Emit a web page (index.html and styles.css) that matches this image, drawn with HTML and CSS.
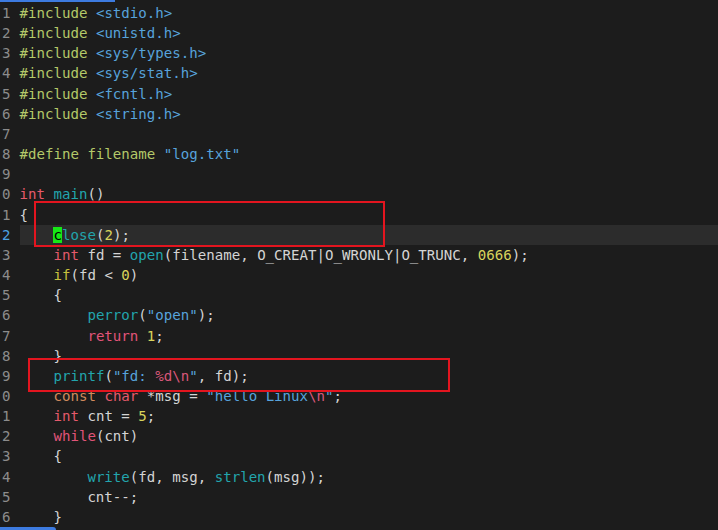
FILE: index.html
```html
<!DOCTYPE html>
<html lang="en">
<head>
    <meta charset="UTF-8">
    <title>log.c - vim</title>
    <link rel="stylesheet" href="styles.css">
</head>
<body>
    <div class="tab-bar"></div>

    <div class="editor">
        <div class="line"><span class="nr">1</span><span class="code"><span class="pp">#include</span> <span class="str">&lt;stdio.h&gt;</span></span></div>
        <div class="line"><span class="nr">2</span><span class="code"><span class="pp">#include</span> <span class="str">&lt;unistd.h&gt;</span></span></div>
        <div class="line"><span class="nr">3</span><span class="code"><span class="pp">#include</span> <span class="str">&lt;sys/types.h&gt;</span></span></div>
        <div class="line"><span class="nr">4</span><span class="code"><span class="pp">#include</span> <span class="str">&lt;sys/stat.h&gt;</span></span></div>
        <div class="line"><span class="nr">5</span><span class="code"><span class="pp">#include</span> <span class="str">&lt;fcntl.h&gt;</span></span></div>
        <div class="line"><span class="nr">6</span><span class="code"><span class="pp">#include</span> <span class="str">&lt;string.h&gt;</span></span></div>
        <div class="line"><span class="nr">7</span><span class="code"></span></div>
        <div class="line"><span class="nr">8</span><span class="code"><span class="pp">#define filename</span> <span class="str">"log.txt"</span></span></div>
        <div class="line"><span class="nr">9</span><span class="code"></span></div>
        <div class="line"><span class="nr">10</span><span class="code"><span class="kw">int</span> <span class="fn">main</span>()</span></div>
        <div class="line"><span class="nr">11</span><span class="code">{</span></div>
        <div class="line current"><span class="nr">12</span><span class="code">    <span class="cursor">c</span><span class="fn">lose</span>(<span class="num">2</span>);</span></div>
        <div class="line"><span class="nr">13</span><span class="code">    <span class="kw">int</span> fd = <span class="fn">open</span>(filename, O_CREAT|O_WRONLY|O_TRUNC, <span class="num">0666</span>);</span></div>
        <div class="line"><span class="nr">14</span><span class="code">    <span class="cond">if</span>(fd &lt; <span class="num">0</span>)</span></div>
        <div class="line"><span class="nr">15</span><span class="code">    {</span></div>
        <div class="line"><span class="nr">16</span><span class="code">        <span class="fn">perror</span>(<span class="str">"open"</span>);</span></div>
        <div class="line"><span class="nr">17</span><span class="code">        <span class="ret">return</span> <span class="num">1</span>;</span></div>
        <div class="line"><span class="nr">18</span><span class="code">    }</span></div>
        <div class="line"><span class="nr">19</span><span class="code">    <span class="fn">printf</span>(<span class="str">"fd: </span><span class="esc">%d\n</span><span class="str">"</span>, fd);</span></div>
        <div class="line"><span class="nr">20</span><span class="code">    <span class="cst">const</span> <span class="kw">char</span> *msg = <span class="str">"hello Linux</span><span class="esc">\n</span><span class="str">"</span>;</span></div>
        <div class="line"><span class="nr">21</span><span class="code">    <span class="kw">int</span> cnt = <span class="num">5</span>;</span></div>
        <div class="line"><span class="nr">22</span><span class="code">    <span class="ret">while</span>(cnt)</span></div>
        <div class="line"><span class="nr">23</span><span class="code">    {</span></div>
        <div class="line"><span class="nr">24</span><span class="code">        <span class="fn">write</span>(fd, msg, <span class="fn">strlen</span>(msg));</span></div>
        <div class="line"><span class="nr">25</span><span class="code">        cnt--;</span></div>
        <div class="line"><span class="nr">26</span><span class="code">    }</span></div>
    </div>

    <!-- annotation boxes drawn over the screenshot -->
    <div class="mark mark-close"></div>
    <div class="mark mark-printf"></div>

    <div class="task-bar"></div>
</body>
</html>
```

FILE: styles.css
```css
* {
    margin: 0;
    padding: 0;
    box-sizing: border-box;
}

body {
    width: 718px;
    height: 530px;
    overflow: hidden;
    position: relative;
    background: #1c1c1c;
    color: #d4d4d4;
    font-family: 'DejaVu Sans Mono', 'Liberation Mono', monospace;
    font-size: 14.1px;
}

.editor {
    padding-top: 3px;
    margin-left: 2px;
}

.line {
    display: flex;
    height: 20.16px;
    line-height: 20.16px;
    white-space: pre;
}

/* gutter is scrolled so only the last digit shows */
.nr {
    width: 8.5px;
    overflow: hidden;
    direction: rtl;
    color: #8c8c8c;
    margin-right: 9px;
    flex-shrink: 0;
}

.code {
    flex: 1;
}

.current .nr {
    color: #4ba3e3;
}

.current .code {
    background: #2c2c2c;
}

.cursor {
    background: #16e816;
    color: #000;
}

.pp { color: #b4c969; }
.str { color: #57a3db; }
.kw { color: #e55a6b; }
.fn { color: #22a5ad; }
.num { color: #d9d45c; }
.cond { color: #c9c23e; }
.ret { color: #e25479; }
.esc { color: #d9577a; }
.cst { color: #d08a5c; }

.mark {
    position: absolute;
    border: 2px solid #e3151f;
}

.mark-close {
    left: 34px;
    top: 201px;
    width: 351px;
    height: 46px;
}

.mark-printf {
    left: 28px;
    top: 358px;
    width: 422px;
    height: 34px;
}

.tab-bar {
    position: absolute;
    left: 0;
    top: 0;
    width: 115px;
    height: 2px;
    background: #3d7be0;
}

.task-bar {
    position: absolute;
    left: 0;
    bottom: 0;
    width: 56px;
    height: 3px;
    background: #3d7be0;
    border-top-right-radius: 3px;
}
```
